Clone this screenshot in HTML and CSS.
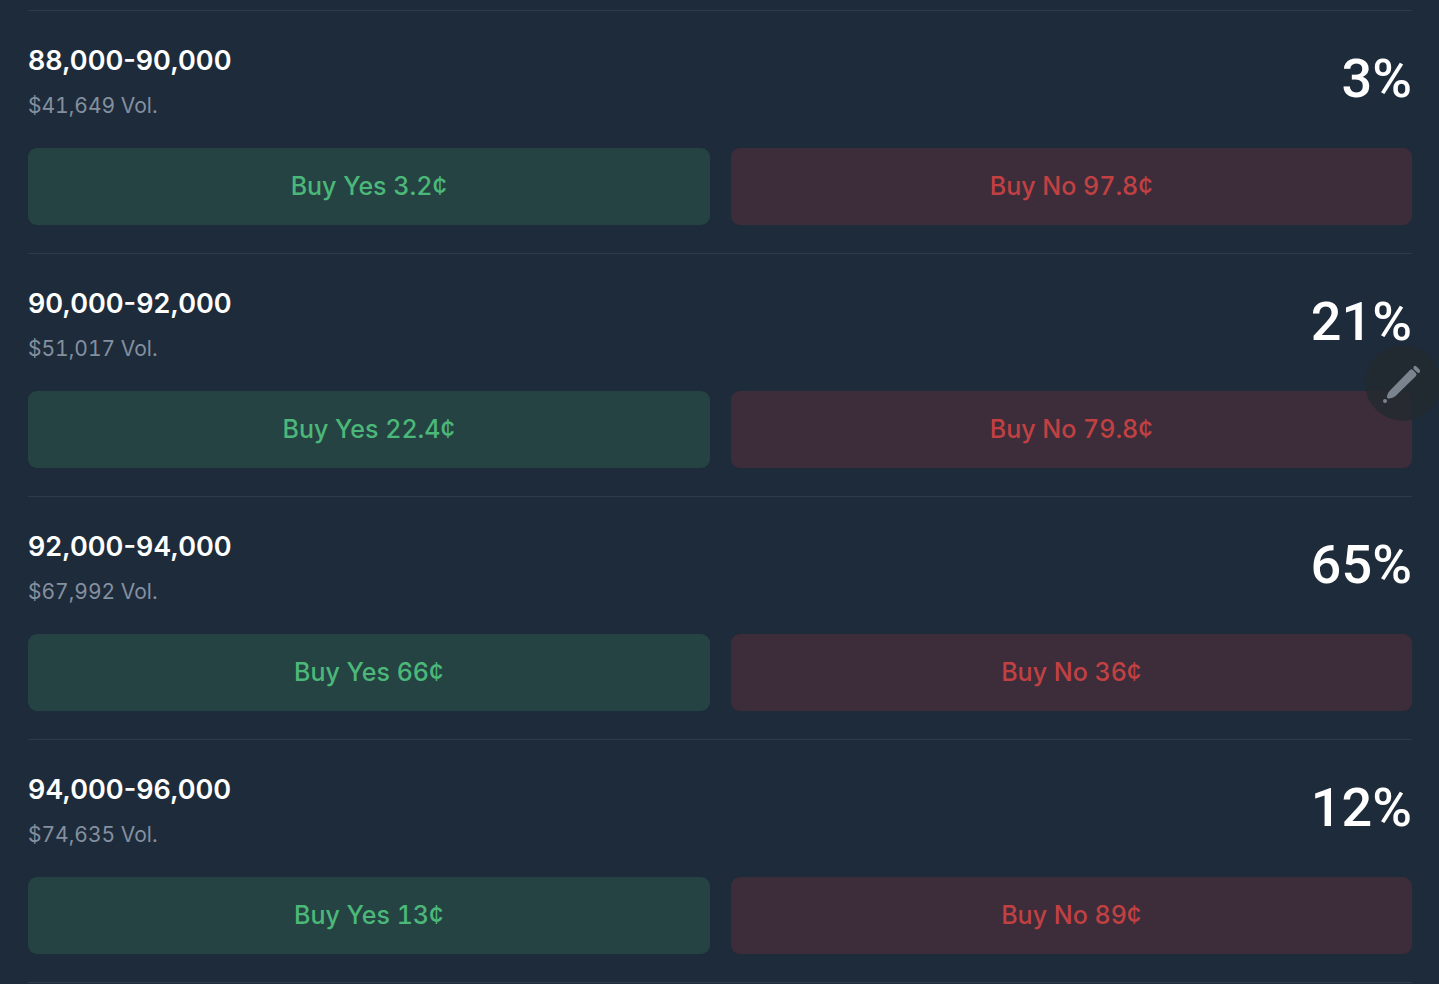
FILE: index.html
```html
<!DOCTYPE html>
<html lang="en">

<head>
    <title>Market outcomes</title>
    <meta charset="utf-8">
    <meta name="viewport" content="width=device-width, initial-scale=1.0">
    <link rel="stylesheet" href="styles.css">
</head>

<body>
    <main class="outcomes">
        <section class="outcome">
            <div class="outcome-head">
                <div class="outcome-info">
                    <h2>88,000-90,000</h2>
                    <p>$41,649 Vol.</p>
                </div>
                <div class="outcome-chance">3%</div>
            </div>
            <div class="outcome-actions">
                <button type="button" class="buy buy-yes">Buy Yes 3.2¢</button>
                <button type="button" class="buy buy-no">Buy No 97.8¢</button>
            </div>
        </section>
        <section class="outcome">
            <div class="outcome-head">
                <div class="outcome-info">
                    <h2>90,000-92,000</h2>
                    <p>$51,017 Vol.</p>
                </div>
                <div class="outcome-chance">21%</div>
            </div>
            <div class="outcome-actions">
                <button type="button" class="buy buy-yes">Buy Yes 22.4¢</button>
                <button type="button" class="buy buy-no">Buy No 79.8¢</button>
            </div>
        </section>
        <section class="outcome">
            <div class="outcome-head">
                <div class="outcome-info">
                    <h2>92,000-94,000</h2>
                    <p>$67,992 Vol.</p>
                </div>
                <div class="outcome-chance">65%</div>
            </div>
            <div class="outcome-actions">
                <button type="button" class="buy buy-yes">Buy Yes 66¢</button>
                <button type="button" class="buy buy-no">Buy No 36¢</button>
            </div>
        </section>
        <section class="outcome">
            <div class="outcome-head">
                <div class="outcome-info">
                    <h2>94,000-96,000</h2>
                    <p>$74,635 Vol.</p>
                </div>
                <div class="outcome-chance">12%</div>
            </div>
            <div class="outcome-actions">
                <button type="button" class="buy buy-yes">Buy Yes 13¢</button>
                <button type="button" class="buy buy-no">Buy No 89¢</button>
            </div>
        </section>
    </main>
    <button type="button" class="edit-fab" aria-label="Edit">
        <svg width="76" height="76" viewBox="0 0 76 76" aria-hidden="true">
            <path d="M45 25 Q46.5 23.500 48 25 L51 28 Q52 29.500 51 31 L30 51.500 Q26 54 23 53.500 Q21.500 53 22 51 Q22.500 48 25 45.500 Z" />
            <path d="M48.500 22 Q50 20 51.500 21.500 L54.500 24.500 Q56 26 54.500 27.500 Q53.500 28.500 52.500 27.500 L49 24.500 Q48 23.500 48.500 22 Z" />
            <circle cx="20" cy="56" r="2" />
        </svg>
    </button>
</body>

</html>
```
FILE: styles.css
```css
body {
    margin: 0;
    background-color: #1e2b3a;
    color: #fff;
    font-family: Inter, "Liberation Sans", sans-serif;
    font-variant-numeric: tabular-nums;
}

.outcomes {
    margin: 10px 27px 0 28px;
    border-bottom: 1px solid #2e3b4a;
}

.outcome {
    padding: 30px 0 28px;
    border-top: 1px solid #2e3b4a;
}

.outcome-head {
    display: flex;
    justify-content: space-between;
    align-items: flex-start;
    margin-bottom: 26px;
}

.outcome-info h2 {
    margin: 0 0 9px;
    font-size: 27px;
    font-weight: 600;
    font-variant-numeric: normal;
    line-height: 40px;
}

.outcome-info p {
    margin: 0;
    font-size: 21px;
    line-height: 32px;
    color: #8490a0;
}

.outcome-chance {
    font-family: Roboto, "Liberation Sans", sans-serif;
    font-size: 54px;
    font-weight: 500;
    line-height: 76px;
}

.outcome-actions {
    display: grid;
    grid-template-columns: 1fr 1fr;
    gap: 21px;
}

.buy {
    padding: 18px;
    border: 0;
    border-radius: 9px;
    font-family: inherit;
    font-size: 25px;
    font-weight: 500;
    font-variant-numeric: inherit;
    line-height: 41px;
    cursor: pointer;
}

.buy-yes {
    background-color: #254343;
    color: #4bb879;
}

.buy-no {
    background-color: #3d2d3a;
    color: #c14143;
}

/* floating edit button, over the list */
.edit-fab {
    position: fixed;
    top: 345px;
    right: -2px;
    width: 76px;
    height: 76px;
    padding: 0;
    border: 0;
    border-radius: 50%;
    background-color: rgba(34, 41, 48, .8);
    cursor: pointer;
}

.edit-fab svg {
    display: block;
    fill: #7b848e;
}
```
